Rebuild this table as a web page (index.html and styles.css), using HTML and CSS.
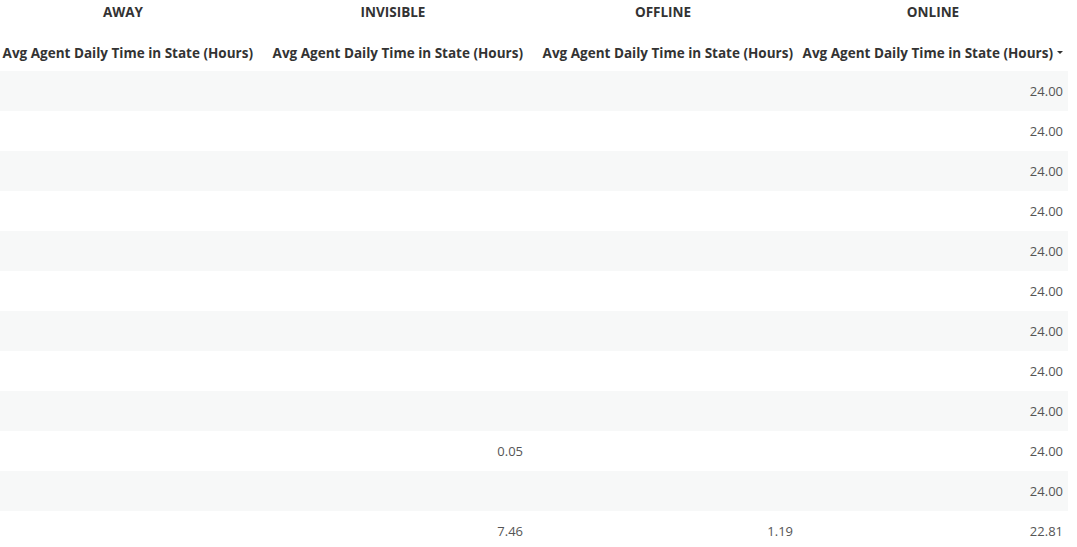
FILE: index.html
```html
<!DOCTYPE html>
<html>
<head>
<meta charset="utf-8">
<link rel="stylesheet" href="styles.css">
</head>
<body>
<table class="grid">
  <colgroup>
    <col class="c1"><col class="c2"><col class="c3"><col class="c4">
  </colgroup>
  <thead>
    <tr class="group">
      <th class="first">AWAY</th><th>INVISIBLE</th><th>OFFLINE</th><th>ONLINE</th>
    </tr>
    <tr class="measure">
      <th>Avg Agent Daily Time in State (Hours)</th>
      <th>Avg Agent Daily Time in State (Hours)</th>
      <th>Avg Agent Daily Time in State (Hours)</th>
      <th>Avg Agent Daily Time in State (Hours)<span class="caret"></span></th>
    </tr>
  </thead>
  <tbody>
    <tr><td></td><td></td><td></td><td>24.00</td></tr>
    <tr><td></td><td></td><td></td><td>24.00</td></tr>
    <tr><td></td><td></td><td></td><td>24.00</td></tr>
    <tr><td></td><td></td><td></td><td>24.00</td></tr>
    <tr><td></td><td></td><td></td><td>24.00</td></tr>
    <tr><td></td><td></td><td></td><td>24.00</td></tr>
    <tr><td></td><td></td><td></td><td>24.00</td></tr>
    <tr><td></td><td></td><td></td><td>24.00</td></tr>
    <tr><td></td><td></td><td></td><td>24.00</td></tr>
    <tr><td></td><td>0.05</td><td></td><td>24.00</td></tr>
    <tr><td></td><td></td><td></td><td>24.00</td></tr>
    <tr><td></td><td>7.46</td><td>1.19</td><td>22.81</td></tr>
  </tbody>
</table>
</body>
</html>
```
FILE: styles.css
```css
html, body {
  margin: 0;
  padding: 0;
  background: #fff;
}
body {
  font-family: "Open Sans", "Noto Sans", sans-serif;
}
.grid {
  width: 1068px;
  border-collapse: collapse;
  table-layout: fixed;
}
.c1 { width: 258px; }
.c2 { width: 270px; }
.c3 { width: 270px; }
.c4 { width: 270px; }
.grid th {
  color: #333;
  font-weight: 700;
  font-size: 13.5px;
  white-space: nowrap;
  padding: 0 5px 0 0;
}
.group th {
  height: 29px;
  vertical-align: top;
  padding-top: 3px;
  text-align: center;
  padding-right: 0;
}
.group th.first {
  padding-right: 12px;
}
.measure th {
  height: 37px;
  text-align: right;
  vertical-align: middle;
  padding-top: 2px;
}
.caret {
  display: inline-block;
  width: 0;
  height: 0;
  margin-left: 4px;
  vertical-align: middle;
  border-left: 3px solid transparent;
  border-right: 3px solid transparent;
  border-top: 3px solid #333;
  position: relative;
  top: -1px;
}
.grid td {
  height: 40px;
  padding: 0 5px 0 0;
  text-align: right;
  font-size: 13px;
  color: #555;
  vertical-align: middle;
}
.grid tbody tr:nth-child(odd) td {
  background: #f7f8f8;
}
```
